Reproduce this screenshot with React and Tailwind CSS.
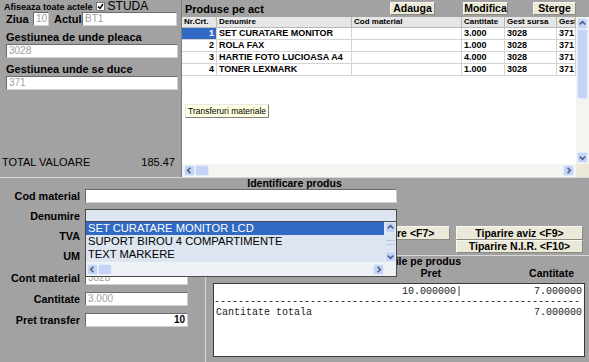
import React from "react";

const F = "font-['Liberation_Sans',Arial,sans-serif]";

function Input({ className = "", children }) {
  return (
    <div
      className={`h-[14px] bg-white border border-[#6b6b6b] border-b-[#cfcfcf] border-r-[#cfcfcf] text-[10px] leading-[12px] px-[2px] text-[#a0a0a0] overflow-hidden whitespace-nowrap ${className}`}
    >
      {children}
    </div>
  );
}

function Btn({ className = "", children }) {
  return (
    <div
      className={`bg-[#ece9d8] border border-[#f8f8f4] border-b-[#8c8a80] border-r-[#8c8a80] flex items-center justify-center font-bold text-[10.5px] leading-[11px] whitespace-nowrap ${className}`}
    >
      {children}
    </div>
  );
}

function ArrowBox({ dir, className = "" }) {
  const paths = {
    up: "M2 6 L5 3 L8 6",
    down: "M2 4 L5 7 L8 4",
    left: "M6 2 L3 5 L6 8",
    right: "M4 2 L7 5 L4 8",
  };
  return (
    <div
      className={`w-[11px] h-[11px] bg-[#c4d4f6] border border-[#e4ecfc] rounded-[2px] flex items-center justify-center ${className}`}
    >
      <svg width="9" height="9" viewBox="0 0 10 10">
        <path d={paths[dir]} stroke="#4d6185" strokeWidth="1.8" fill="none" />
      </svg>
    </div>
  );
}

const rows = [
  ["1", "SET CURATARE MONITOR", "", "3.000", "3028", "371"],
  ["2", "ROLA FAX", "", "1.000", "3028", "371"],
  ["3", "HARTIE FOTO LUCIOASA A4", "", "4.000", "3028", "371"],
  ["4", "TONER LEXMARK", "", "1.000", "3028", "371"],
];
const widths = ["w-[35px]", "w-[135px]", "w-[110px]", "w-[43px]", "w-[52px]", "w-[19px]"];
const heads = ["Nr.Crt.", "Denumire", "Cod material", "Cantitate", "Gest sursa", "Gest"];

function Label({ children, className = "" }) {
  return (
    <div className={`w-[80px] text-right font-bold text-[10.8px] leading-[12px] whitespace-nowrap ${className}`}>
      {children}
    </div>
  );
}

export default function App() {
  return (
    <div className={`w-[589px] h-[362px] bg-[#a2a2a2] overflow-hidden relative text-black ${F}`}>
      {/* TOP SECTION */}
      <div className="flex h-[178px] border-b border-[#d8d8d8]">
        {/* left panel */}
        <div className="w-[182px] flex flex-col border-r border-[#7c7c7c]">
          <div className="flex items-center h-[12px] pl-[4px] pt-[1px]">
            <span className="font-bold text-[9px] leading-[10px] whitespace-nowrap">Afiseaza toate actele</span>
            <div className="ml-[3px] w-[9px] h-[9px] bg-white border border-[#7a7a7a] flex items-center justify-center">
              <svg width="7" height="7" viewBox="0 0 7 7">
                <path d="M1 3.5 L3 5.5 L6 1" stroke="#000" strokeWidth="1.4" fill="none" />
              </svg>
            </div>
            <span className="ml-[3px] text-[12px] leading-[13px]">STUDA</span>
          </div>
          <div className="flex items-center h-[14px] pl-[6px]">
            <span className="font-bold text-[11px] leading-[12px] w-[27px]">Ziua</span>
            <Input className="w-[16px]">10</Input>
            <span className="font-bold text-[11px] leading-[12px] ml-[5px] w-[28px]">Actul</span>
            <Input className="w-[95px]">BT1</Input>
          </div>
          <div className="pl-[6px] mt-[5px] font-bold text-[11px] leading-[13px]">Gestiunea de unde pleaca</div>
          <div className="pl-[6px]">
            <Input className="w-[172px]">3028</Input>
          </div>
          <div className="pl-[6px] mt-[5px] font-bold text-[11px] leading-[13px]">Gestiunea unde se duce</div>
          <div className="pl-[6px]">
            <Input className="w-[172px]">371</Input>
          </div>
          <div className="flex-1" />
          <div className="flex justify-between items-center pl-[2px] pr-[6px] pb-[9px] text-[11px] leading-[12px]">
            <span>TOTAL VALOARE</span>
            <span>185.47</span>
          </div>
        </div>

        {/* right panel */}
        <div className="flex-1 flex flex-col min-w-0">
          <div className="h-[17px] flex items-center">
            <span className="ml-[3px] font-bold text-[11px] leading-[12px]">Produse pe act</span>
            <div className="flex-1" />
            <Btn className="w-[45px] h-[13px]">Adauga</Btn>
            <Btn className="w-[45px] h-[13px] ml-[28px]">Modifica</Btn>
            <Btn className="w-[43px] h-[13px] ml-[25px] mr-[13px]">Sterge</Btn>
          </div>
          <div className="flex-1 bg-white flex flex-col relative min-h-0">
            <div className="flex flex-1 min-h-0">
              <div className="flex-1 flex flex-col overflow-hidden">
                <div className="flex h-[11px] bg-[#e6e6e6] border-b border-[#b8b8b8]">
                  {heads.map((h, i) => (
                    <div
                      key={i}
                      className={`${widths[i]} shrink-0 border-r border-[#b8b8b8] font-bold text-[8px] leading-[10px] pl-[2px] overflow-hidden whitespace-nowrap`}
                    >
                      {h}
                    </div>
                  ))}
                </div>
                {rows.map((r, ri) => (
                  <div key={ri} className="flex h-[12px] border-b border-[#d4d4d4]">
                    {r.map((c, i) => (
                      <div
                        key={i}
                        className={`${widths[i]} shrink-0 border-r border-[#d4d4d4] font-bold text-[9px] leading-[11px] overflow-hidden whitespace-nowrap ${
                          i === 0 ? "text-right pr-[2px]" : "pl-[2px]"
                        } ${i === 0 && ri === 0 ? "bg-[#316ac5] text-white" : ""}`}
                      >
                        {c}
                      </div>
                    ))}
                  </div>
                ))}
              </div>
              {/* vertical scrollbar */}
              <div className="w-[13px] bg-[#f4f4f0] flex flex-col items-center pt-[1px]">
                <ArrowBox dir="up" />
                <div className="w-[11px] h-[70px] bg-[#c4d4f6] border border-[#e4ecfc] rounded-[2px]" />
                <div className="flex-1" />
                <ArrowBox dir="down" className="mb-[1px]" />
              </div>
            </div>
            {/* horizontal scrollbar */}
            <div className="h-[13px] flex items-center bg-[#f4f4f0]">
              <ArrowBox dir="left" className="ml-[2px]" />
              <div className="w-[14px] h-[11px] bg-[#c4d4f6] border border-[#e4ecfc] rounded-[2px]" />
              <div className="flex-1" />
              <ArrowBox dir="right" className="mr-[2px]" />
              <div className="w-[13px] h-[13px] bg-[#ece9d8]" />
            </div>
            {/* tooltip */}
            <div className="absolute left-[3px] top-[87px] h-[14px] px-[2px] bg-[#ffffe1] border border-[#808080] border-t-[#e8e8e8] border-l-[#e8e8e8] text-[8.5px] leading-[12px] whitespace-nowrap">
              Transferuri materiale
            </div>
          </div>
        </div>
      </div>

      {/* BOTTOM SECTION */}
      <div className="flex flex-col">
        <div className="h-[11px] text-center font-bold text-[10.5px] leading-[11px]">Identificare produs</div>
        {/* upper block */}
        <div className="h-[66px] flex flex-col">
          <div className="flex items-center h-[14px]">
            <Label>Cod material</Label>
            <Input className="ml-[5px] w-[312px]" />
          </div>
          <div className="flex items-center h-[13px] mt-[6px]">
            <Label>Denumire</Label>
            <div className="ml-[5px] w-[312px] h-[13px] bg-[#dde5f0] border border-[#4a4a4a]" />
          </div>
          <div className="flex h-[18px]">
            <Label className="mt-[8px]">TVA</Label>
            <Btn className="ml-[274px] mt-[4px] w-[96px] h-[14px]">Salvare &lt;F7&gt;</Btn>
            <Btn className="ml-[6px] mt-[4px] w-[127px] h-[14px]">Tiparire aviz &lt;F9&gt;</Btn>
          </div>
          <div className="flex h-[15px]">
            <Label className="mt-[10px]">UM</Label>
            <Btn className="ml-[376px] w-[127px] h-[13px]">Tiparire N.I.R. &lt;F10&gt;</Btn>
          </div>
        </div>
        {/* lower block */}
        <div className="h-[107px] flex">
          <div className="w-[205px] pt-[16px] flex flex-col gap-[8px]">
            <div className="flex items-center h-[13px]">
              <Label>Cont material</Label>
              <Input className="ml-[5px] w-[103px]">3028</Input>
            </div>
            <div className="flex items-center h-[13px]">
              <Label>Cantitate</Label>
              <Input className="ml-[5px] w-[103px]">3.000</Input>
            </div>
            <div className="flex items-center h-[13px]">
              <Label>Pret transfer</Label>
              <Input className="ml-[5px] w-[103px] text-right !text-black font-bold">10</Input>
            </div>
          </div>
          <div className="flex-1 border-t border-l border-[#d8d8d8] flex flex-col">
            <div className="w-[255px] h-[11px] text-right font-bold text-[10.5px] leading-[11px] whitespace-nowrap overflow-visible">
              Cantitati disponibile pe produs
            </div>
            <div className="flex h-[16px] font-bold text-[10.5px] leading-[12px]">
              <div className="w-[255px] text-right pr-[20px]">Pret</div>
              <div className="flex-1 text-right pr-[15px]">Cantitate</div>
            </div>
            <div className="ml-[7px] w-[372px] h-[74px] bg-white border border-[#3a3a3a] font-['Liberation_Mono',monospace] text-[10px] leading-[11px] text-[#222] pt-[2px] overflow-hidden">
              <div className="flex">
                <div className="w-[248px] text-right whitespace-pre">10.000000|</div>
                <div className="flex-1 text-right pr-[2px]">7.000000</div>
              </div>
              <div className="whitespace-nowrap leading-[10px]">{"-".repeat(61)}</div>
              <div className="flex">
                <div className="pl-[2px]">Cantitate totala</div>
                <div className="flex-1 text-right pr-[2px]">7.000000</div>
              </div>
            </div>
          </div>
        </div>
      </div>

      {/* dropdown overlay */}
      <div className="absolute left-[85px] top-[221px] w-[312px] h-[56px] bg-[#dde5f0] border border-[#4a4a4a] flex flex-col">
        <div className="flex flex-1">
          <div className="flex-1 text-[11.2px] leading-[13px] whitespace-nowrap overflow-hidden">
            <div className="h-[13px] bg-[#316ac5] text-white pl-[2px]">SET CURATARE MONITOR LCD</div>
            <div className="h-[13px] pl-[2px]">SUPORT BIROU 4 COMPARTIMENTE</div>
            <div className="h-[13px] pl-[2px]">TEXT MARKERE</div>
          </div>
          <div className="w-[12px] flex flex-col items-center">
            <ArrowBox dir="up" />
            <div className="flex-1 flex items-center">
              <div className="w-[9px] h-[5px] border-t border-b border-[#b7c6e6]" />
            </div>
            <ArrowBox dir="down" />
          </div>
        </div>
        <div className="h-[14px] flex items-center bg-[#eef1f6]">
          <ArrowBox dir="left" className="ml-[1px]" />
          <div className="w-[14px] h-[11px] bg-[#c4d4f6] border border-[#e4ecfc] rounded-[2px]" />
          <div className="flex-1" />
          <ArrowBox dir="right" className="mr-[6px]" />
          <div className="w-[6px]" />
        </div>
      </div>
    </div>
  );
}
